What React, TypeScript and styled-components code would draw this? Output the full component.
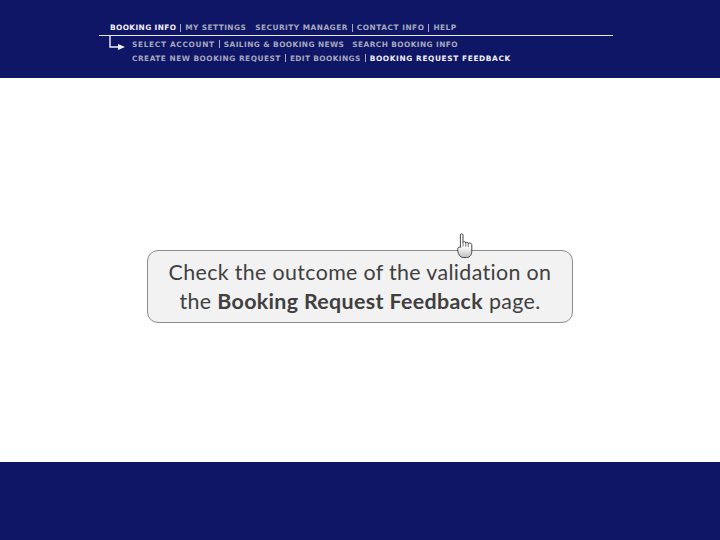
import styled, { createGlobalStyle } from "styled-components"

const GlobalStyle = createGlobalStyle`
	html, body {
		margin: 0;
		padding: 0;
		background: white;
	}
`

const Page = styled.div`
	width: 720px;
	height: 540px;
	display: flex;
	flex-direction: column;
	overflow: hidden;
`

const Header = styled.header`
	height: 78px;
	background-color: #0f1666;
	padding: 21px 107px 0 99px;
	box-sizing: border-box;
`

const TopMenu = styled.nav`
	display: flex;
	align-items: center;
	height: 13px;
	padding: 0 0 1px 11px;
	border-bottom: 1px solid #e8e8f0;
`

const SubArea = styled.div`
	position: relative;
	padding: 1px 0 0 33px;
`

const SubMenu = styled.nav`
	display: flex;
	align-items: center;
	height: 14px;
`

const Item = styled.span<{ $active?: boolean; $gap?: number; $spacing?: number }>`
	font-family: "DejaVu Sans", sans-serif;
	font-size: 7.4px;
	font-weight: 700;
	letter-spacing: ${p => p.$spacing ?? 0.47}px;
	white-space: nowrap;
	color: ${p => p.$active ? "#f0f0f6" : "#a6a8bc"};
	margin-right: ${p => p.$gap ?? 0}px;
`

const Sep = styled.span`
	width: 1px;
	height: 8px;
	margin: 0 4px;
	background-color: #a6a8bc;
`

const Arrow = styled.svg`
	position: absolute;
	left: 10px;
	top: 0;
`

const Main = styled.main`
	flex: 1;
	display: flex;
	justify-content: center;
	padding-top: 172px;
	background-color: white;
`

const Callout = styled.div`
	position: relative;
	width: 426px;
	height: 73px;
	box-sizing: border-box;
	padding-top: 7px;
	background-color: #f2f2f2;
	border: 1px solid #8c8c8c;
	border-radius: 11px;
	font-family: "Lato", sans-serif;
	font-size: 21.4px;
	letter-spacing: 0.35px;
	line-height: 28.5px;
	color: #404040;
	text-align: center;
`

const Hand = styled.svg`
	position: absolute;
	left: 309px;
	top: -18px;
`

const Footer = styled.footer`
	height: 78px;
	background-color: #0f1666;
`

const App = () => {
	return <Page>
		<GlobalStyle />
		<Header>
			<TopMenu>
				<Item $active $spacing={0.38}>BOOKING INFO</Item>
				<Sep />
				<Item $gap={9} $spacing={0.42}>MY SETTINGS</Item>
				<Item $spacing={0.48}>SECURITY MANAGER</Item>
				<Sep />
				<Item $spacing={0.52}>CONTACT INFO</Item>
				<Sep />
				<Item $spacing={0.42}>HELP</Item>
			</TopMenu>
			<SubArea>
				<Arrow width="20" height="16" viewBox="0 0 20 16">
					<path d="M1 0V11H10" fill="none" stroke="#f0f0f6" strokeWidth="1.4" />
					<path d="M9 8L16 11L9 14Z" fill="#f0f0f6" />
				</Arrow>
				<SubMenu>
					<Item $spacing={0.68}>SELECT ACCOUNT</Item>
					<Sep />
					<Item $gap={8} $spacing={0.42}>SAILING &amp; BOOKING NEWS</Item>
					<Item $spacing={0.42}>SEARCH BOOKING INFO</Item>
				</SubMenu>
				<SubMenu>
					<Item $spacing={0.5}>CREATE NEW BOOKING REQUEST</Item>
					<Sep />
					<Item $spacing={0.38}>EDIT BOOKINGS</Item>
					<Sep />
					<Item $active $spacing={0.62}>BOOKING REQUEST FEEDBACK</Item>
				</SubMenu>
			</SubArea>
		</Header>
		<Main>
			<Callout>
				Check the outcome of the validation on
				<br />
				the <b>Booking Request Feedback</b> page.
				<Hand width="18" height="26" viewBox="0 0 18 26">
					<defs>
						<linearGradient id="handShade" x1="0" y1="0" x2="0" y2="1">
							<stop offset="0.55" stopColor="#ffffff" />
							<stop offset="1" stopColor="#bdbdbd" />
						</linearGradient>
					</defs>
					<path
						d="M3.4 2C3.4 .4 6 .4 6 2V9.5C6.6 8.2 8.6 8.2 8.8 10C9.2 8.8 11.2 9 11.2 10.6C11.8 9.6 14.8 9.8 14.8 11.8V18C14.8 21 13.6 24.5 9.5 24.5H6.5C4 24.5 2.5 23 1.5 20.5C1 19 .4 17 .8 15.5C1.3 14.2 2.6 13.8 3.4 14.5Z"
						fill="url(#handShade)"
						stroke="#333"
						strokeWidth="0.9"
					/>
					<path d="M6 9.5V13.5M8.8 10V13.5M11.2 10.6V14" fill="none" stroke="#333" strokeWidth="0.7" />
				</Hand>
			</Callout>
		</Main>
		<Footer />
	</Page>
}

export default App
